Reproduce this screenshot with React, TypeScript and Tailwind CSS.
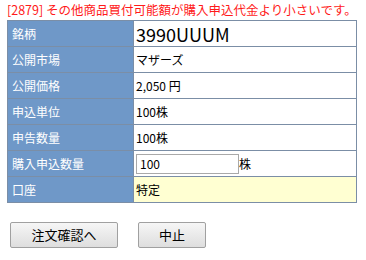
export default function App() {
  const rows: { label: string; value: React.ReactNode; cls?: string }[] = [
    { label: "銘柄", value: <span className="text-[18px] leading-none">3990UUUM</span> },
    { label: "公開市場", value: "マザーズ" },
    { label: "公開価格", value: "2,050 円" },
    { label: "申込単位", value: "100株" },
    { label: "申告数量", value: "100株" },
    {
      label: "購入申込数量",
      value: (
        <div className="flex items-center">
          <input
            defaultValue="100"
            className="w-[103px] h-[20px] border border-[#a9a9a9] px-[3px] text-[12px] outline-none bg-white"
          />
          <span>株</span>
        </div>
      ),
    },
    { label: "口座", value: "特定", cls: "bg-[#ffffd2]" },
  ];

  return (
    <div
      className="w-[366px] h-[260px] bg-white text-[12px] text-black"
      style={{ fontFamily: '"Noto Sans CJK JP", "Noto Sans", sans-serif' }}
    >
      <div className="pl-[7px] pt-[3px] h-[20px] leading-[14px] text-[12.5px] text-[#ff1a1a]">
        [2879] その他商品買付可能額が購入申込代金より小さいです。
      </div>
      <table className="ml-[7px] w-[350px] border-collapse border border-[#7b8ea6]">
        <tbody>
          {rows.map((r) => (
            <tr key={r.label} className="h-[26px]">
              <td className="w-[126px] border border-[#7b8ea6] bg-[#6f98c8] text-white pl-[4px] leading-none">
                {r.label}
              </td>
              <td className={`border border-[#7b8ea6] pl-[2px] leading-none ${r.cls ?? ""}`}>{r.value}</td>
            </tr>
          ))}
        </tbody>
      </table>
      <div className="flex gap-[20px] pl-[10px] mt-[19px]">
        <button className="w-[108px] h-[26px] border border-[#a0a0a0] rounded-[2px] bg-gradient-to-b from-[#f6f6f6] to-[#dedede] text-[13px]">
          注文確認へ
        </button>
        <button className="w-[68px] h-[26px] border border-[#a0a0a0] rounded-[2px] bg-gradient-to-b from-[#f6f6f6] to-[#dedede] text-[13px]">
          中止
        </button>
      </div>
    </div>
  );
}
